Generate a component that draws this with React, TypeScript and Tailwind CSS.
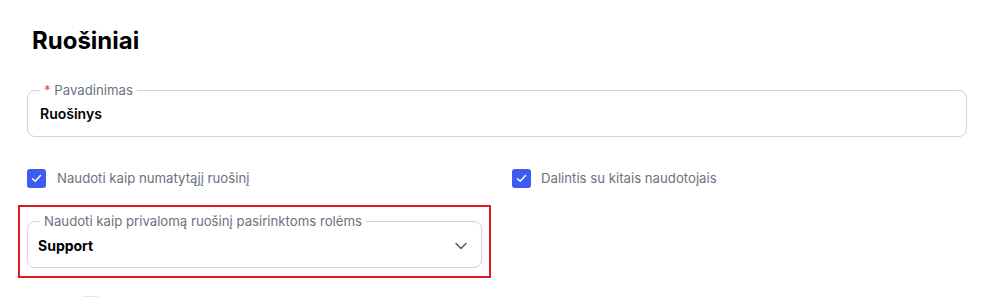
import { ChevronDown } from "lucide-react";

const Check = () => (
  <span className="flex h-[19px] w-[19px] shrink-0 items-center justify-center rounded-[3px] bg-[#3d5af1]">
    <svg width="11" height="9" viewBox="0 0 11 9" fill="none">
      <polyline points="1.5,4.8 4.2,7.3 9.5,1.6" stroke="white" strokeWidth="1.5" strokeLinecap="round" strokeLinejoin="round" />
    </svg>
  </span>
);

const App = () => {
  return (
    <div className="min-h-[298px] bg-white pl-[27px] pr-[24px] font-['Inter',sans-serif]">
      <h1 className="pl-[5px] pt-[25px] text-2xl leading-8 font-bold text-black">Ruošiniai</h1>

      <fieldset className="mt-[26px] min-w-0 rounded-lg border border-[#d4d4d4] px-[12px] pb-[12px] pt-[7px]">
        <legend className="px-1 text-[13.2px] leading-[14px] text-[#6b7280]">
          <span className="text-[#e5484d]">* </span>Pavadinimas
        </legend>
        <div className="text-sm leading-5 font-semibold text-black">Ruošinys</div>
      </fieldset>

      <div className="mt-[31px] grid grid-cols-2 gap-x-[30px]">
        <label className="flex items-center gap-[11px]">
          <Check />
          <span className="text-[13.2px] leading-5 text-[#6b7280]">Naudoti kaip numatytąjį ruošinį</span>
        </label>
        <label className="flex items-center gap-[10px]">
          <Check />
          <span className="text-[13.2px] leading-5 text-[#6b7280]">Dalintis su kitais naudotojais</span>
        </label>
      </div>

      <div className="-ml-[9px] mt-[17px] w-[473px] border-2 border-[#e0191f] px-[7px] pb-[8px] pt-[7px]">
        <fieldset className="min-w-0 rounded-lg border border-[#d4d4d4] pb-[11px] pl-[12px] pr-[10px] pt-[8px]">
          <legend className="px-1 text-[13.2px] leading-[14px] text-[#6b7280]">
            Naudoti kaip privalomą ruošinį pasirinktoms rolėms
          </legend>
          <div className="flex items-center justify-between">
            <span className="-ml-[2px] text-sm leading-5 font-bold text-black">Support</span>
            <ChevronDown size={20} strokeWidth={1.8} className="text-[#555b66]" />
          </div>
        </fieldset>
      </div>

      <div className="mt-[18px] pl-[54px]">
        <span className="block h-[19px] w-[19px] rounded-[3px] border border-[#e5e7eb]" />
      </div>
    </div>
  );
};

export default App;
